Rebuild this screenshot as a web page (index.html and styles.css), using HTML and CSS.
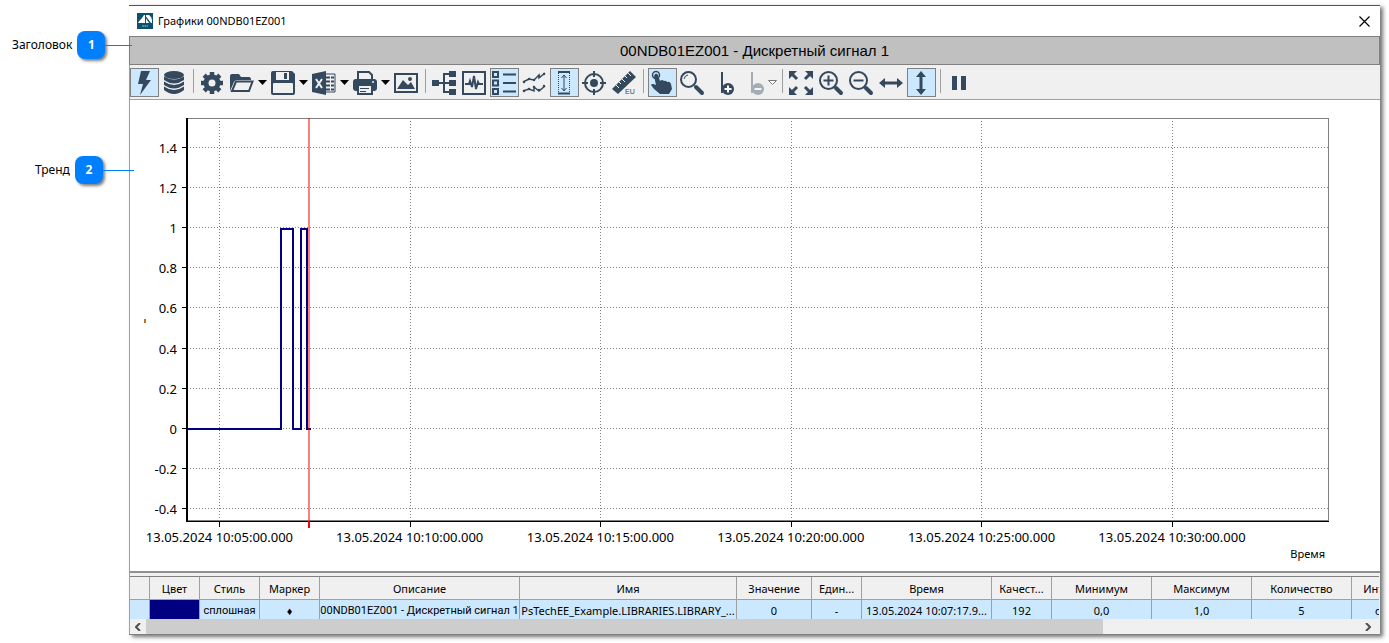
FILE: index.html
```
<!DOCTYPE html>
<html lang="ru">
<head>
<meta charset="utf-8">
<title>Графики 00NDB01EZ001</title>
<link rel="stylesheet" href="styles.css">
</head>
<body>
<main class="window">
  <header class="titlebar">
    <svg class="logo" viewBox="0 0 16 16"><path fill="#0b5270" d="M0 0h16v16H0z"/><path fill="#fff" d="M1 10q1-2 4-5l2-3h1v8zM9 2h3q3 2 3 6v2h-1L9 3.500zM9 5.500V10h3z"/><path stroke="#9fc0cd" stroke-dasharray="2 .4" d="M5 13h6"/></svg>
    <span class="caption">Графики 00NDB01EZ001</span>
    <button class="close" aria-label="Закрыть"><svg viewBox="0 0 11 11"><path d="m.5.500 10 10M10.500.500l-10 10" stroke="#000" stroke-width="1.200"/></svg></button>
  </header>
  <h1 class="heading">00NDB01EZ001 - Дискретный сигнал 1</h1>

  <nav class="toolbar" aria-label="Панель инструментов">
    <button class="tool on" aria-label="Онлайн"><svg viewBox="0 0 24 24"><path class="f" d="M9 0h9l-4 9h5L8 24l3-11H6z"/></svg></button>
    <button class="tool" aria-label="Архив"><svg viewBox="0 0 24 24"><ellipse class="f" cx="12" cy="4" rx="10" ry="4"/><path class="f" d="M2 5.500q10 6 20 0V9q-10 7-20 0zM2 10.500q10 7 20 0V14q-10 7-20 0zM2 15.500q10 7 20 0V19q-10 8-20 0z"/></svg></button>
    <span class="sep"></span>
    <button class="tool" aria-label="Настройки"><svg viewBox="0 0 24 24"><circle cx="12" cy="12" r="6" fill="none" stroke="#34495e" stroke-width="5"/><path stroke="#34495e" stroke-width="4.500" d="M12 1v4M12 19v4M1 12h4M19 12h4M4.200 4.200 7 7M17 17l2.800 2.800M4.200 19.800 7 17M17 7l2.800-2.800"/></svg></button>
    <button class="tool" aria-label="Открыть"><svg viewBox="0 0 24 24"><path class="f" d="M0 20V5q0-2 2-2h7l2 3h8q2 0 2 3H7Q5 9 4 11z"/><path class="s2" d="M2 20 6 10.500h16.500L19 20z"/></svg></button><button class="drop" aria-label="Ещё"><svg viewBox="0 0 9 5"><path d="M0 0h9L4.500 5z"/></svg></button>
    <button class="tool" aria-label="Сохранить"><svg viewBox="0 0 24 24"><path class="f" d="M2 0h19l3 3v19q0 2-2 2H2q-2 0-2-2V2q0-2 2-2z"/><path fill="#f0f0f0" d="M5 1h13v8H5zM2 13q0-1 1-1h18q1 0 1 1v9H2z"/><path class="f" d="M13 2h3v6h-3z"/></svg></button><button class="drop" aria-label="Ещё"><svg viewBox="0 0 9 5"><path d="M0 0h9L4.500 5z"/></svg></button>
    <button class="tool" aria-label="Экспорт в Excel"><svg viewBox="0 0 24 24"><path class="f" d="M0 3 14 0v24L0 21z"/><path class="s1" d="M13 3h10v18H13"/><path class="s2" d="M14 6.500h8M14 10.500h8M14 14.500h8M14 18.500h8"/><path stroke="#f0f0f0" d="M18.500 4v16"/><path stroke="#f0f0f0" stroke-width="2" d="m4 8 6 9M10 8l-6 9"/></svg></button><button class="drop" aria-label="Ещё"><svg viewBox="0 0 9 5"><path d="M0 0h9L4.500 5z"/></svg></button>
    <button class="tool" aria-label="Печать"><svg viewBox="0 0 24 24"><path fill="#f0f0f0" stroke="#34495e" stroke-width="2" d="M5 9V1h11l3 3v5z"/><rect class="f" y="8" width="24" height="12" rx="3"/><path fill="#f0f0f0" stroke="#34495e" stroke-width="2" d="M5 14h14v9H5z"/><path class="s1" d="M7 17.500h9M7 20.500h6"/><circle cx="20" cy="11" r="1" fill="#f0f0f0"/></svg></button><button class="drop" aria-label="Ещё"><svg viewBox="0 0 9 5"><path d="M0 0h9L4.500 5z"/></svg></button>
    <button class="tool" aria-label="Изображение"><svg viewBox="0 0 24 24"><path class="s2" d="M1 3h22v18H1z"/><path class="f" d="m3 18 6-9 5 5 3-3 4 7z"/><circle class="f" cx="16" cy="8" r="2"/></svg></button>
    <span class="sep"></span>
    <button class="tool" aria-label="Дерево"><svg viewBox="0 0 24 24"><path class="f" d="M0 9h7v6H0zM17 0h7v6h-7zM17 9h7v6h-7zM17 18h7v6h-7z"/><path class="s2" d="M7 12h10M17 3h-5v18h5"/></svg></button>
    <button class="tool" aria-label="Сигнал"><svg viewBox="0 0 24 24"><path class="s2" d="M1 1h22v22H1z"/><path class="s2" d="M3 13h4l1-3 2 6 2-11 2 13 2-7 1 2h4"/></svg></button>
    <button class="tool on" aria-label="Легенда"><svg viewBox="0 0 24 24"><path class="s2" d="M1 1h5v5H1zM1 9.500h5v5H1zM1 18h5v5H1zM11 3.500h13M11 12h13M11 20.500h13"/></svg></button>
    <button class="tool" aria-label="Тренды"><svg viewBox="0 0 24 24"><path class="s1 bold" d="m1 11 6-3 5 1 5-5 0 3 6-5M1 20l6-2 5 2 0-4 5 4 6-5"/><path stroke="#34495e" stroke-width="2.500" stroke-linecap="round" d="M2 11h0M7 8h0M12 9h0M17 5h0M22 3h0M2 20h0M7 18h0M12 16h0M17 19h0M22 15h0"/></svg></button>
    <button class="tool on" aria-label="Масштаб"><svg viewBox="0 0 24 24"><path class="s2" d="M6 1h12M6 22.500h12"/><path class="s1" d="M12 4v16M9.500 7 12 4l2.500 3M9.500 17l2.500 3 2.500-3"/><path class="s1" stroke-dasharray="1 1" d="M6.500 2v20M17.500 2v20"/></svg></button>
    <button class="tool" aria-label="Прицел"><svg viewBox="0 0 24 24"><circle class="s2" cx="12" cy="12" r="9"/><circle class="f" cx="12" cy="12" r="4"/><path class="s2" d="M12 0v6M12 18v6M0 12h6M18 12h6"/></svg></button>
    <button class="tool" aria-label="Единицы измерения"><svg viewBox="0 0 24 24"><path class="f" d="m0 18 18-18 6 6L6 23z"/><path stroke="#f0f0f0" d="m4 14 3 3M7 11l2 2M10 8l3 3M13 5l2 2M16 2l3 3"/><text x="13" y="23" class="unit">EU</text></svg></button>
    <span class="sep"></span>
    <button class="tool on" aria-label="Выбор"><svg viewBox="0 0 24 24"><circle class="s1 bold" cx="6" cy="4" r="3.500"/><path class="f" d="M5 3q2-1 3 1l2 6q2-2 4 0 2-1 3 1 3-1 4 2l1 5-3 5h-9l-6-5-3-4q1-2 5 0L4 5z"/></svg></button>
    <button class="tool" aria-label="Лупа"><svg viewBox="0 0 24 24"><circle class="s2" cx="8.500" cy="8.500" r="7.500"/><path class="s1" d="M4 8q1-4 4-4"/><path stroke="#34495e" stroke-width="4" stroke-linecap="round" d="m16 16 6 6"/></svg></button>
    <button class="tool" aria-label="Добавить"><svg viewBox="0 0 24 24"><path class="s2" d="M12 1v21"/><circle class="f" cx="18" cy="18" r="6"/><path stroke="#fff" stroke-width="2" d="M14.500 18h7M18 14.500v7"/></svg></button>
    <button class="tool" aria-label="Удалить" disabled><svg viewBox="0 0 24 24"><path class="s2" d="M12 1v21"/><circle class="f" cx="18" cy="18" r="6"/><path stroke="#fff" stroke-width="2" d="M14.500 18h7"/></svg></button><button class="drop" aria-label="Ещё"><svg viewBox="0 0 9 5"><path fill="#fff" stroke="#777" d="M.5.500h8l-4 4z"/></svg></button>
    <span class="sep"></span>
    <button class="tool" aria-label="Развернуть"><svg viewBox="0 0 24 24"><path class="f" d="M0 0h8L0 8zM24 0v8l-8-8zM0 24v-8l8 8zM24 24h-8l8-8z"/><path stroke="#34495e" stroke-width="3" d="m3 3 5 5M21 3l-5 5M3 21l5-5M21 21l-5-5"/></svg></button>
    <button class="tool" aria-label="Увеличить"><svg viewBox="0 0 24 24"><circle class="s2" cx="9.500" cy="9.500" r="8.500"/><path class="s2" d="M4.500 9.500h10M9.500 4.500v10"/><path stroke="#34495e" stroke-width="4" stroke-linecap="round" d="m17 17 5 5"/></svg></button>
    <button class="tool" aria-label="Уменьшить"><svg viewBox="0 0 24 24"><circle class="s2" cx="9.500" cy="9.500" r="8.500"/><path class="s2" d="M4.500 9.500h10"/><path stroke="#34495e" stroke-width="4" stroke-linecap="round" d="m17 17 5 5"/></svg></button>
    <button class="tool" aria-label="По ширине"><svg viewBox="0 0 24 24"><path class="f" d="m0 12 6-5v3.500h12V7l6 5-6 5v-3.500H6V17z"/></svg></button>
    <button class="tool on" aria-label="По высоте"><svg viewBox="0 0 24 24"><path class="f" d="m12 0 5 6h-3.500v12H17l-5 6-5-6h3.500V6H7z"/></svg></button>
    <span class="sep"></span>
    <button class="tool" aria-label="Пауза"><svg viewBox="0 0 24 24"><path class="f" d="M5 5h5v14H5zM14 5h5v14h-5z"/></svg></button>
  </nav>

  <section class="chart">
    <svg class="plot">
      <svg class="plot-lines" viewBox="0 0 1142 403" preserveAspectRatio="none" width="100%" height="100%">
        <path class="grid" d="M0 29.500h1142M0 69.500h1142M0 109.500h1142M0 149.500h1142M0 189.500h1142M0 230.500h1142M0 270.500h1142M0 310.500h1142M0 350.500h1142M0 390.500h1142M32.500 0v403M223.500 0v403M413.500 0v403M604.500 0v403M794.500 0v403M985.500 0v403"/>
        <path class="frame" d="M0 .5h1141.500V402.500H0"/>
        <path class="series" d="M0 311h94V111h12v200h8V111h6v200h4"/>
        <path class="axis" d="M-1 403.500h1143"/>
        <path class="axis thick" d="M0 0v403"/>
        <path class="axis" d="M-5 29.500h5M-5 69.500h5M-5 109.500h5M-5 149.500h5M-5 189.500h5M-5 230.500h5M-5 270.500h5M-5 310.500h5M-5 350.500h5M-5 390.500h5M32.500 403v6M223.500 403v6M413.500 403v6M604.500 403v6M794.500 403v6M985.500 403v6"/>
        <path class="cursor" d="M122 0v403"/>
        <path class="cursor-end" d="M122 403v7"/>
      </svg>
      <g class="y-labels">
        <text x="-10" y="7.400%" dy="5">1.4</text><text x="-10" y="17.300%" dy="5">1.2</text><text x="-10" y="27.300%" dy="5">1</text><text x="-10" y="37.200%" dy="5">0.8</text><text x="-10" y="47.100%" dy="5">0.6</text><text x="-10" y="57.300%" dy="5">0.4</text><text x="-10" y="67.200%" dy="5">0.2</text><text x="-10" y="77.100%" dy="5">0</text><text x="-10" y="87%" dy="5">-0.2</text><text x="-10" y="97%" dy="5">-0.4</text>
      </g>
      <g class="x-labels">
        <text x="2.840%" y="100%" dy="21">13.05.2024 10:05:00.000</text><text x="19.500%" y="100%" dy="21">13.05.2024 10:10:00.000</text><text x="36.200%" y="100%" dy="21">13.05.2024 10:15:00.000</text><text x="52.880%" y="100%" dy="21">13.05.2024 10:20:00.000</text><text x="69.570%" y="100%" dy="21">13.05.2024 10:25:00.000</text><text x="86.250%" y="100%" dy="21">13.05.2024 10:30:00.000</text>
      </g>
      <text class="axis-title" x="100%" y="100%" dx="-4" dy="37">Время</text>
      <path fill="#c07020" d="M-43 201h2v4h-2z"/>
    </svg>
  </section>

  <section class="legend">
    <div class="table-clip">
      <table>
        <colgroup><col class="c20"><col class="c50"><col class="c60"><col class="c60"><col class="c200"><col class="c217"><col class="c75"><col class="c50"><col class="c130"><col class="c60"><col class="c100"><col class="c100"><col class="c100"><col class="c75"></colgroup>
        <thead><tr><th></th><th>Цвет</th><th>Стиль</th><th>Маркер</th><th>Описание</th><th>Имя</th><th>Значение</th><th>Един...</th><th>Время</th><th>Качест...</th><th>Минимум</th><th>Максимум</th><th>Количество</th><th>Интервал</th></tr></thead>
        <tbody><tr><td></td><td class="swatch"></td><td class="compact">сплошная</td><td>♦</td><td class="compact">00NDB01EZ001 - Дискретный сигнал 1</td><td>PsTechEE_Example.LIBRARIES.LIBRARY_...</td><td>0</td><td>-</td><td>13.05.2024 10:07:17.9...</td><td>192</td><td>0,0</td><td>1,0</td><td>5</td><td>сред.</td></tr></tbody>
      </table>
    </div>
    <div class="scrollbar">
      <button class="arrow" aria-label="Влево"><svg viewBox="0 0 6 8"><path d="M5 0 1 4l4 4"/></svg></button>
      <div class="track"><div class="thumb"></div></div>
      <button class="arrow right" aria-label="Вправо"><svg viewBox="0 0 6 8"><path d="m1 0 4 4-4 4"/></svg></button>
    </div>
  </section>
</main>

<div class="callout first"><span class="label">Заголовок</span><span class="badge">1</span><span class="leader"></span></div>
<div class="callout second"><span class="label">Тренд</span><span class="badge">2</span><span class="leader"></span></div>
</body>
</html>
```
FILE: styles.css
```
* { box-sizing: border-box; }
body {
  margin: 0;
  min-height: 100vh;
  padding: 5px 9px 8px 129px;
  display: flex;
  position: relative;
  background: #fff;
  color: #000;
  font: 11px/16px "Noto Sans", "Open Sans", sans-serif;
}
button { margin: 0; padding: 0; border: 0; background: none; font: inherit; }
svg { display: block; }

.window {
  flex: 1;
  min-width: 0;
  display: flex;
  flex-direction: column;
  background: #fff;
  border-top: 1px solid #555;
  border-bottom: 1px solid #808080;
  box-shadow: 3px 2px 4px rgba(0, 0, 0, .55);
}
.titlebar { height: 30px; padding: 0 10px 0 8px; display: flex; align-items: center; gap: 5px; }
.logo { width: 16px; height: 16px; }
.caption { flex: 1; }
.close svg { width: 11px; height: 11px; }
.heading {
  margin: 0;
  border: 1px solid #808080;
  background: #c0c0c0;
  font: 15px/27px "Liberation Sans", Arial, sans-serif;
  text-align: center;
}

.toolbar {
  display: flex;
  height: 35px;
  padding-top: 3px;
  border-bottom: 1px solid #a0a0a0;
  border-left: 1px solid #a0a0a0;
  background: #f0f0f0;
}
.tool { width: 29px; height: 29px; margin-right: 1px; padding: 1px; border: 1px solid transparent; flex: none; }
.tool svg { width: 24px; height: 24px; overflow: visible; }
.tool.on { background: #cce8ff; border-color: #808080; }
.tool:disabled { opacity: .4; }
.drop { width: 11px; height: 29px; flex: none; }
.drop svg { width: 9px; height: 5px; }
.sep { width: 8px; height: 24px; margin-top: 1px; flex: none; background: linear-gradient(#a0a0a0, #a0a0a0) 3px 0 / 1px 100% no-repeat; }
.f { fill: #34495e; }
.s1, .s2 { fill: none; stroke: #34495e; stroke-width: 1; }
.s1.bold { stroke-width: 1.5; }
.s2 { stroke-width: 2; }
.unit { font: 7px "Liberation Sans", Arial, sans-serif; fill: #34495e; }

.chart {
  flex: 1;
  min-height: 200px;
  display: flex;
  padding: 18px 51px 50px 57px;
  border-left: 1px solid #a0a0a0;
}
.plot { flex: 1; min-width: 0; height: auto; overflow: visible; }
.plot-lines { overflow: visible; }
.plot-lines path { fill: none; vector-effect: non-scaling-stroke; shape-rendering: crispEdges; }
.plot-lines .grid { stroke: #808080; stroke-dasharray: 1 2; }
.frame { stroke: #808080; }
.axis { stroke: #000; }
.thick { stroke-width: 2; }
.series { stroke: #000080; stroke-width: 2; }
.cursor { stroke: #ff0000; stroke-opacity: .5; stroke-width: 2; }
.cursor-end { stroke: #ff0000; stroke-width: 2; }
.plot text { font-size: 13px; }
.plot .axis-title { font-size: 11px; }
.y-labels, .axis-title { text-anchor: end; }
.x-labels { text-anchor: middle; }

.legend { border-left: 1px solid #a0a0a0; border-top: 2px solid #909090; padding: 3px 1px 0 0; background: #f0f0f0; }
.table-clip { height: 43px; overflow: hidden; border-top: 1px solid #808080; }
table { table-layout: fixed; width: 1297px; border-collapse: separate; border-spacing: 0; }
th, td {
  height: 23px;
  padding: 0;
  border-right: 1px solid #a0a0a0;
  border-bottom: 1px solid #a0a0a0;
  font-weight: 400;
  text-align: center;
  white-space: nowrap;
  overflow: hidden;
}
th { padding-top: 2px; }
td { background: #cce8ff; }
.compact { font-family: Roboto, sans-serif; }
.swatch { background: #000080; }
.c20 { width: 20px; }
.c50 { width: 50px; }
.c60 { width: 60px; }
.c75 { width: 75px; }
.c100 { width: 100px; }
.c130 { width: 130px; }
.c200 { width: 200px; }
.c217 { width: 217px; }
.scrollbar { display: flex; height: 15px; background: #f0f0f0; }
.arrow { width: 16px; display: grid; place-items: center; }
.arrow.right { width: 22px; }
.arrow svg { width: 6px; height: 8px; fill: none; stroke: #505050; stroke-width: 2; }
.track { flex: 1; }
.thumb { width: 79%; height: 100%; background: #cdcdcd; }

.callout { position: absolute; display: flex; align-items: center; font-size: 12px; }
.first { top: 31px; left: 12px; width: 120px; }
.second { top: 156px; left: 35px; width: 99px; }
.badge {
  width: 28px;
  height: 28px;
  margin-left: 5px;
  border-radius: 8px;
  background: #0080ff;
  color: #fff;
  font-weight: 700;
  line-height: 28px;
  text-align: center;
  box-shadow: 2px 2px 3px rgba(0, 0, 0, .5);
}
.leader { flex: 1; height: 1px; background: #0080ff; }
```
